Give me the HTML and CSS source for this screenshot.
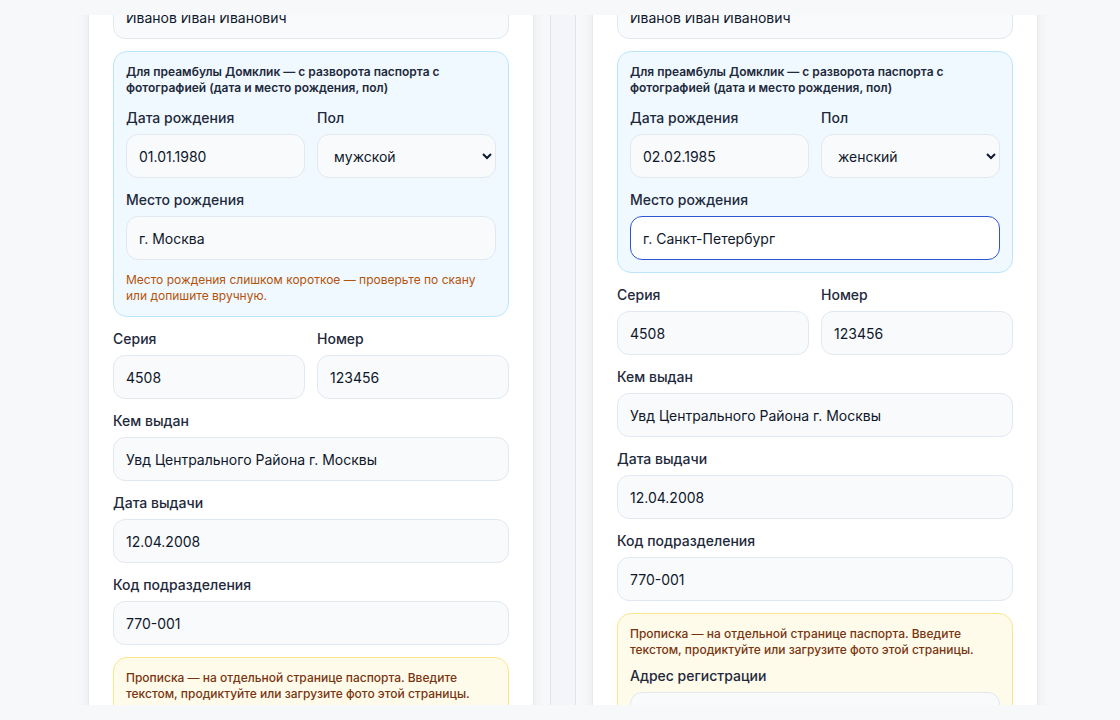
FILE: index.html
```html
<!DOCTYPE html>
<html lang="ru">
<head>
<meta charset="utf-8">
<title>Паспортные данные</title>
<link rel="stylesheet" href="styles.css">
</head>
<body>
<div class="workspace">
  <section class="pane pane-left">
    <form class="card">
      <div class="field">
        <label class="label">ФИО</label>
        <input class="input" type="text" value="Иванов Иван Иванович">
      </div>

      <div class="note-box">
        <p class="note-title">Для преамбулы Домклик — с разворота паспорта с фотографией (дата и место рождения, пол)</p>
        <div class="row">
          <div class="field">
            <label class="label">Дата рождения</label>
            <input class="input" type="text" value="01.01.1980">
          </div>
          <div class="field">
            <label class="label">Пол</label>
            <select class="input select">
              <option selected>мужской</option>
              <option>женский</option>
            </select>
          </div>
        </div>
        <div class="field">
          <label class="label">Место рождения</label>
          <input class="input" type="text" value="г. Москва">
        </div>
        <p class="hint-warn">Место рождения слишком короткое — проверьте по скану или допишите вручную.</p>
      </div>

      <div class="row">
        <div class="field">
          <label class="label">Серия</label>
          <input class="input" type="text" value="4508">
        </div>
        <div class="field">
          <label class="label">Номер</label>
          <input class="input" type="text" value="123456">
        </div>
      </div>
      <div class="field">
        <label class="label">Кем выдан</label>
        <input class="input" type="text" value="Увд Центрального Района г. Москвы">
      </div>
      <div class="field">
        <label class="label">Дата выдачи</label>
        <input class="input" type="text" value="12.04.2008">
      </div>
      <div class="field">
        <label class="label">Код подразделения</label>
        <input class="input" type="text" value="770-001">
      </div>

      <div class="address-box">
        <p class="address-note">Прописка — на отдельной странице паспорта. Введите текстом, продиктуйте или загрузите фото этой страницы.</p>
        <div class="field">
          <label class="label">Адрес регистрации</label>
          <input class="input" type="text" value="">
        </div>
      </div>
    </form>
  </section>

  <div class="splitter"></div>

  <section class="pane pane-right">
    <form class="card">
      <div class="field">
        <label class="label">ФИО</label>
        <input class="input" type="text" value="Иванов Иван Иванович">
      </div>

      <div class="note-box">
        <p class="note-title">Для преамбулы Домклик — с разворота паспорта с фотографией (дата и место рождения, пол)</p>
        <div class="row">
          <div class="field">
            <label class="label">Дата рождения</label>
            <input class="input" type="text" value="02.02.1985">
          </div>
          <div class="field">
            <label class="label">Пол</label>
            <select class="input select">
              <option>мужской</option>
              <option selected>женский</option>
            </select>
          </div>
        </div>
        <div class="field">
          <label class="label">Место рождения</label>
          <input class="input input-focus" type="text" value="г. Санкт-Петербург">
        </div>
      </div>

      <div class="row">
        <div class="field">
          <label class="label">Серия</label>
          <input class="input" type="text" value="4508">
        </div>
        <div class="field">
          <label class="label">Номер</label>
          <input class="input" type="text" value="123456">
        </div>
      </div>
      <div class="field">
        <label class="label">Кем выдан</label>
        <input class="input" type="text" value="Увд Центрального Района г. Москвы">
      </div>
      <div class="field">
        <label class="label">Дата выдачи</label>
        <input class="input" type="text" value="12.04.2008">
      </div>
      <div class="field">
        <label class="label">Код подразделения</label>
        <input class="input" type="text" value="770-001">
      </div>

      <div class="address-box">
        <p class="address-note">Прописка — на отдельной странице паспорта. Введите текстом, продиктуйте или загрузите фото этой страницы.</p>
        <div class="field">
          <label class="label">Адрес регистрации</label>
          <input class="input" type="text" value="">
        </div>
      </div>
    </form>
  </section>
</div>
</body>
</html>
```

FILE: styles.css
```css
* {
  box-sizing: border-box;
}

body {
  margin: 0;
  background: #f7f8fa;
  font-family: Inter, "Noto Sans", "Liberation Sans", sans-serif;
  color: #0f172a;
}

p {
  margin: 0;
}

/* two side-by-side scroll panes with a splitter between them */
.workspace {
  display: flex;
  height: 690px;
  margin: 15px 0;
}

.pane {
  display: flex;
  align-items: flex-start;
  overflow: hidden;
  height: 100%;
}

.pane-left {
  width: 550px;
  justify-content: flex-end;
  padding-right: 17px;
}

.pane-right {
  flex: 1;
  justify-content: flex-start;
  padding-left: 17px;
}

.splitter {
  width: 26px;
  height: 100%;
  background: #f3f5f8;
  border-left: 1px solid #dfe4ec;
  border-right: 1px solid #dfe4ec;
}

/* the form card, scrolled down past its header */
.card {
  width: 444px;
  flex-shrink: 0;
  margin-top: -70px;
  padding: 24px;
  background: #ffffff;
  border-radius: 16px;
  box-shadow: 0 0 14px rgba(15, 23, 42, 0.07), 0 0 0 1px rgba(15, 23, 42, 0.03);
  display: flex;
  flex-direction: column;
  gap: 12px;
}

.field {
  display: flex;
  flex-direction: column;
  gap: 6px;
  min-width: 0;
}

.row {
  display: grid;
  grid-template-columns: 1fr 1fr;
  gap: 12px;
}

.label {
  font-size: 14px;
  line-height: 20px;
  font-weight: 500;
  color: #1e293b;
}

.input {
  width: 100%;
  height: 44px;
  padding: 0 12px;
  border: 1px solid #e2e8f0;
  border-radius: 12px;
  background: #f8fafc;
  font-family: inherit;
  font-size: 14px;
  color: #0f172a;
  outline: none;
}

.select {
  padding: 0 8px 0 12px;
}

.input-focus {
  background: #ffffff;
  border-color: #2f55d4;
}

/* passport main spread block */
.note-box {
  display: flex;
  flex-direction: column;
  gap: 12px;
  padding: 12px;
  border: 1px solid #bae6fd;
  border-radius: 14px;
  background: #f0f9ff;
}

.note-title {
  font-size: 12px;
  line-height: 16px;
  font-weight: 600;
  color: #1e293b;
}

.hint-warn {
  font-size: 12px;
  line-height: 16px;
  color: #b45309;
}

/* registration page block */
.address-box {
  display: flex;
  flex-direction: column;
  gap: 8px;
  padding: 12px;
  border: 1px solid #fde68a;
  border-radius: 14px;
  background: #fffbeb;
}

.address-note {
  font-size: 12px;
  line-height: 16px;
  font-weight: 500;
  color: #78350f;
}
```
